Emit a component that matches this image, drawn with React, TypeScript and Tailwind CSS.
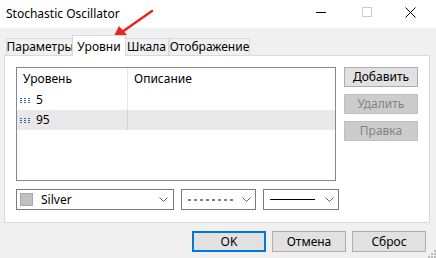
import React from "react";

const font = { fontFamily: '"Noto Sans", "Segoe UI", sans-serif' };

function Chevron() {
  return (
    <svg width="9" height="5" viewBox="0 0 9 5" className="shrink-0">
      <path d="M0.5 0.5 L4.5 4.5 L8.5 0.5" fill="none" stroke="#606060" strokeWidth="1" />
    </svg>
  );
}

function LineIcon() {
  return (
    <svg width="10" height="5" viewBox="0 0 10 5" className="shrink-0">
      <path d="M0 0.5 H2 M4 0.5 H6 M8 0.5 H10 M0 2.5 H2 M4 2.5 H6 M8 2.5 H10 M0 4.5 H2 M4 4.5 H6 M8 4.5 H10" stroke="#2a6ab8" strokeWidth="1" />
    </svg>
  );
}

function Tab({ label, w, selected }: { label: string; w: string; selected?: boolean }) {
  if (selected) {
    return (
      <div
        className={`relative z-10 -mx-[2px] -mb-[1px] h-[21px] ${w} bg-white border border-b-0 border-[#d9d9d9] flex items-start justify-center pt-[2px] text-[12px] text-black`}
      >
        {label}
      </div>
    );
  }
  return (
    <div
      className={`h-[17px] ${w} bg-[#f0f0f0] border border-b-0 border-[#d9d9d9] flex items-center justify-center text-[12px] text-black leading-none`}
    >
      {label}
    </div>
  );
}

function SideButton({ label, disabled }: { label: string; disabled?: boolean }) {
  return (
    <div
      className={`h-[20px] w-[74px] flex items-center justify-center text-[12px] border ${
        disabled ? "bg-[#cccccc] border-[#bfbfbf] text-[#838383]" : "bg-[#e1e1e1] border-[#adadad] text-black"
      }`}
    >
      {label}
    </div>
  );
}

function BottomButton({ label, focused }: { label: string; focused?: boolean }) {
  return (
    <div
      className={`h-[21px] w-[74px] flex items-center justify-center text-[12px] text-black bg-[#e1e1e1] ${
        focused ? "border-2 border-[#0078d7]" : "border border-[#adadad]"
      }`}
    >
      {label}
    </div>
  );
}

export default function App() {
  return (
    <div className="relative w-[436px] h-[258px] bg-[#f0f0f0] overflow-hidden flex flex-col" style={font}>
      {/* Title bar */}
      <div className="h-[28px] bg-white flex items-center pl-[6px] shrink-0">
        <div className="text-[12px] text-black flex-1">Stochastic Oscillator</div>
        <div className="flex items-center h-full">
          <div className="w-[46px] h-full flex items-center justify-center">
            <div className="w-[10px] h-[1px] bg-black mt-[-3px]" />
          </div>
          <div className="w-[46px] h-full flex items-center justify-center">
            <div className="w-[10px] h-[10px] border border-[#cccccc] mt-[-4px]" />
          </div>
          <div className="w-[46px] h-full flex items-center justify-center pr-[6px]">
            <svg width="11" height="11" viewBox="0 0 11 11" className="mt-[-4px]">
              <path d="M0.5 0.5 L10.5 10.5 M10.5 0.5 L0.5 10.5" stroke="#000" strokeWidth="1" />
            </svg>
          </div>
        </div>
      </div>

      {/* Tabs */}
      <div className="mt-[7px] h-[20px] flex items-end pl-[6px]">
        <Tab label="Параметры" w="w-[68px]" />
        <Tab label="Уровни" w="w-[54px]" selected />
        <Tab label="Шкала" w="w-[45px]" />
        <Tab label="Отображение" w="w-[81px]" />
      </div>

      {/* Panel */}
      <div className="ml-[4px] w-[426px] h-[168px] bg-white border border-[#d9d9d9] p-[11px] flex flex-col gap-[8px]">
        <div className="flex gap-[8px]">
          {/* List box */}
          <div className="w-[322px] h-[114px] border border-[#828790] flex flex-col text-[12px] text-black">
            <div className="h-[22px] flex">
              <div className="w-[111px] border-r border-[#e5e5e5] flex items-center pl-[6px]">Уровень</div>
              <div className="flex-1 flex items-center pl-[6px]">Описание</div>
            </div>
            <div className="h-[20px] flex">
              <div className="w-[111px] border-r border-[#e5e5e5] flex items-center pl-[3px] gap-[6px]">
                <LineIcon />
                <span>5</span>
              </div>
              <div className="flex-1" />
            </div>
            <div className="h-[20px] flex bg-[#e8e8e8]">
              <div className="w-[111px] border-r border-[#d4d4d4] flex items-center pl-[3px] gap-[6px]">
                <LineIcon />
                <span>95</span>
              </div>
              <div className="flex-1" />
            </div>
          </div>
          {/* Side buttons */}
          <div className="flex flex-col gap-[7px]">
            <SideButton label="Добавить" />
            <SideButton label="Удалить" disabled />
            <SideButton label="Правка" disabled />
          </div>
        </div>

        {/* Dropdowns */}
        <div className="flex gap-[7px]">
          <div className="w-[158px] h-[21px] border border-[#7a7a7a] bg-white flex items-center pl-[3px] pr-[5px] text-[12px] text-black">
            <div className="w-[13px] h-[13px] bg-[#c0c0c0] border border-[#a8a8a8]" />
            <span className="ml-[8px] flex-1">Silver</span>
            <Chevron />
          </div>
          <div className="w-[75px] h-[21px] border border-[#7a7a7a] bg-white flex items-center pl-[6px] pr-[4px]">
            <svg width="45" height="2" viewBox="0 0 45 2" className="shrink-0">
              <line x1="0" y1="1" x2="45" y2="1" stroke="#000" strokeWidth="1" strokeDasharray="3 3" />
            </svg>
            <div className="flex-1" />
            <Chevron />
          </div>
          <div className="w-[76px] h-[21px] border border-[#7a7a7a] bg-white flex items-center pl-[6px] pr-[4px]">
            <div className="w-[45px] h-[1px] bg-black" />
            <div className="flex-1" />
            <Chevron />
          </div>
        </div>
      </div>

      {/* Bottom buttons */}
      <div className="mt-[8px] flex justify-end gap-[6px] pr-[10px]">
        <BottomButton label="OK" focused />
        <BottomButton label="Отмена" />
        <BottomButton label="Сброс" />
      </div>

      {/* Resize grip */}
      <svg width="8" height="8" viewBox="0 0 8 8" className="absolute right-0 bottom-0">
        <rect x="6" y="0" width="2" height="2" fill="#bcbcbc" />
        <rect x="3" y="3" width="2" height="2" fill="#bcbcbc" />
        <rect x="6" y="3" width="2" height="2" fill="#bcbcbc" />
        <rect x="0" y="6" width="2" height="2" fill="#bcbcbc" />
        <rect x="3" y="6" width="2" height="2" fill="#bcbcbc" />
        <rect x="6" y="6" width="2" height="2" fill="#bcbcbc" />
      </svg>

      {/* Red annotation arrow */}
      <svg width="60" height="45" viewBox="0 0 60 45" className="absolute left-[100px] top-0 pointer-events-none">
        <line x1="52" y1="11" x2="22" y2="32" stroke="#e8261c" strokeWidth="2.5" strokeLinecap="round" />
        <polygon points="13,38 19,26 27,35" fill="#e8261c" />
      </svg>
    </div>
  );
}
